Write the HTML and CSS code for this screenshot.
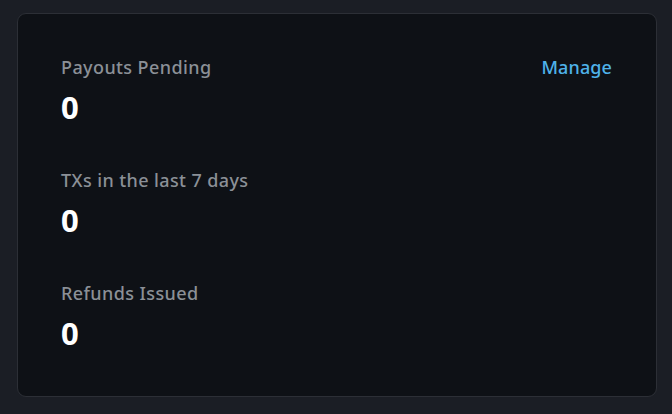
FILE: index.html
```html
<!DOCTYPE html>
<html>
<head>
<meta charset="utf-8">
<link rel="stylesheet" href="styles.css">
</head>
<body>
<div class="card">
  <div class="stat">
    <div class="head">
      <span class="label">Payouts Pending</span>
      <a class="link" href="#">Manage</a>
    </div>
    <div class="value">0</div>
  </div>
  <div class="stat">
    <div class="head"><span class="label">TXs in the last 7 days</span></div>
    <div class="value">0</div>
  </div>
  <div class="stat">
    <div class="head"><span class="label">Refunds Issued</span></div>
    <div class="value">0</div>
  </div>
</div>
</body>
</html>
```
FILE: styles.css
```css
html, body {
  margin: 0;
  padding: 0;
  background: #1b1e25;
}
body {
  padding: 13px 15px 0 17px;
  font-family: "Noto Sans", sans-serif;
}
.card {
  box-sizing: border-box;
  width: 640px;
  height: 384px;
  background: #0e1116;
  border: 1px solid #2c2f36;
  border-radius: 9px;
  padding: 39px 44px 0 43px;
  display: flex;
  flex-direction: column;
  gap: 33px;
}
.head {
  display: flex;
  justify-content: space-between;
  align-items: baseline;
}
.label {
  color: #8b9097;
  font-size: 18px;
  font-weight: 500;
  line-height: 28px;
  letter-spacing: 0.4px;
}
.link {
  color: #4fb3ea;
  font-size: 18px;
  font-weight: 500;
  text-decoration: none;
  line-height: 28px;
  letter-spacing: 0.1px;
}
.value {
  color: #ffffff;
  font-size: 31px;
  font-weight: 700;
  line-height: 52px;
}
```
